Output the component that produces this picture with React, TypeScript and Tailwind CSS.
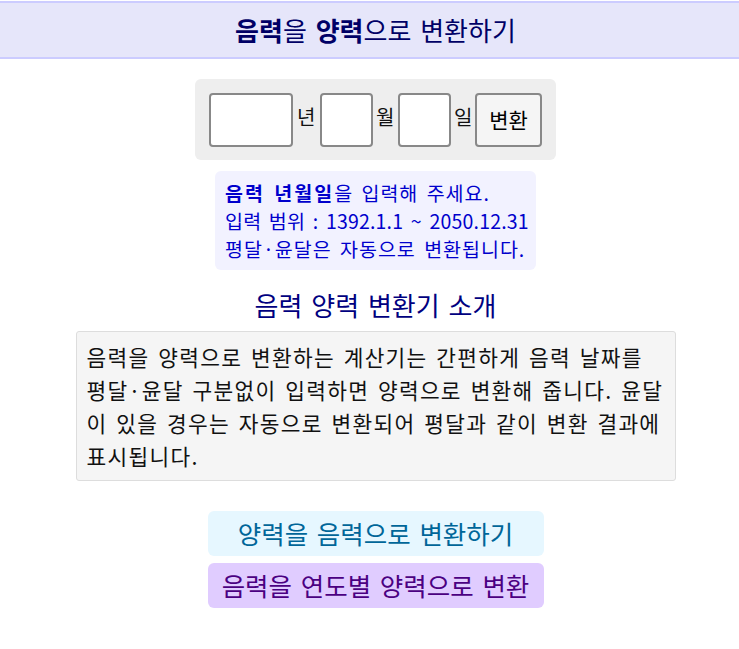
import { useState } from 'react';

const FONT = "font-['Noto_Sans_CJK_KR','Noto_Sans',sans-serif]";

export default function App() {
  const [year, setYear] = useState('');
  const [month, setMonth] = useState('');
  const [day, setDay] = useState('');

  return (
    <div className={`${FONT} min-h-screen bg-white text-[#111]`}>
      {/* Title bar */}
      <header className="mt-px h-[58px] border-y-2 border-[#ccccff] bg-[#e6e6fa] pl-3 flex items-center justify-center">
        <h1 className="text-[26px] leading-none text-[#000066] [word-spacing:3px]">
          <b>음력</b>을 <b>양력</b>으로 변환하기
        </h1>
      </header>

      <main className="pl-3 flex flex-col items-center">
        {/* Date input form */}
        <form
          className="mt-5 flex items-center rounded-md bg-[#eeeeee] px-[14px] pt-[14px] pb-[13px]"
          onSubmit={(e) => e.preventDefault()}
        >
          <input
            value={year}
            onChange={(e) => setYear(e.target.value)}
            className="h-[54px] w-[84px] rounded-[4px] border-2 border-[#888] bg-white px-2 text-[18px] outline-none"
          />
          <span className="ml-[4px] mr-[7px] mb-[6px] w-[16px] text-center text-[20px] leading-none">년</span>
          <input
            value={month}
            onChange={(e) => setMonth(e.target.value)}
            className="h-[54px] w-[53px] rounded-[4px] border-2 border-[#888] bg-white px-2 text-[18px] outline-none"
          />
          <span className="ml-[3px] mr-[6px] mb-[6px] w-[16px] text-center text-[20px] leading-none">월</span>
          <input
            value={day}
            onChange={(e) => setDay(e.target.value)}
            className="h-[54px] w-[53px] rounded-[4px] border-2 border-[#888] bg-white px-2 text-[18px] outline-none"
          />
          <span className="ml-[3px] mr-[5px] mb-[6px] w-[16px] text-center text-[20px] leading-none">일</span>
          <button
            type="submit"
            className="h-[54px] w-[67px] rounded-[4px] border-2 border-[#888] bg-[#f5f5f5] text-[21px] text-black"
          >
            변환
          </button>
        </form>

        {/* Input help */}
        <div className="mt-[11px] w-[321px] whitespace-nowrap rounded-md bg-[#f2f2ff] px-[10px] pt-2 pb-[7px] text-[19.5px] leading-[28px] text-[#0000cc] [word-spacing:3px]">
          <p className="tracking-[1px]">
            <b className="tracking-[2px]">음력 년월일</b>을 입력해 주세요.
          </p>
          <p className="tracking-[0.2px]">입력 범위 : 1392.1.1 ~ 2050.12.31</p>
          <p className="tracking-[1px]">평달·윤달은 자동으로 변환됩니다.</p>
        </div>

        <h2 className="mt-[18px] text-[26px] leading-[34px] text-[#000080] [word-spacing:3px]">
          음력 양력 변환기 소개
        </h2>

        {/* About */}
        <div className="mt-[9px] w-[600px] rounded-[3px] border border-[#dddddd] bg-[#f5f5f5] px-[10px] py-2 text-[21.4px] leading-[33px] tracking-[1.3px] text-[#111] [word-spacing:2.7px]">
          음력을 양력으로 변환하는 계산기는 간편하게 음력 날짜를 평달·윤달 구분없이 입력하면
          양력으로 변환해 줍니다. 윤달이 있을 경우는 자동으로 변환되어 평달과 같이 변환
          결과에 표시됩니다.
        </div>

        {/* Related converters */}
        <a
          href="#"
          className="mt-[30px] flex h-[45px] w-[336px] items-center justify-center rounded-md bg-[#e6f7ff] text-[25.5px] text-[#006699] [word-spacing:3px]"
        >
          양력을 음력으로 변환하기
        </a>
        <a
          href="#"
          className="mt-[7px] flex h-[45px] w-[336px] items-center justify-center rounded-md bg-[#e0ccff] text-[25.5px] text-[#4b0082] [word-spacing:3px]"
        >
          음력을 연도별 양력으로 변환
        </a>
      </main>
    </div>
  );
}
